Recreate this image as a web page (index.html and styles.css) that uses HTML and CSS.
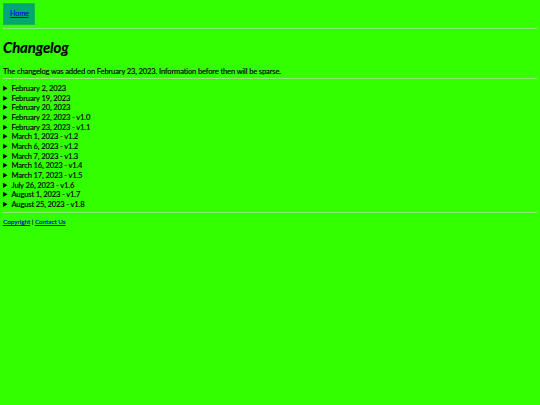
FILE: index.html
```html
<!DOCTYPE html>
<html lang="en">
<head>
  <meta charset="UTF-8" />
  <title>Changelog</title>
  <link rel="stylesheet" href="styles.css">
</head>
<body>
  <nav class="site-nav">
    <a class="nav-item" href="#">Home</a>
  </nav>
  <hr />
  <h1>Changelog</h1>
  <p class="intro">The changelog was added on February 23, 2023. Information before then will be sparse.</p>
  <hr />
  <div class="log-list">
    <details><summary>February 2, 2023</summary></details>
    <details><summary>February 19, 2023</summary></details>
    <details><summary>February 20, 2023</summary></details>
    <details><summary>February 22, 2023 - v1.0</summary></details>
    <details><summary>February 23, 2023 - v1.1</summary></details>
    <details><summary>March 1, 2023 - v1.2</summary></details>
    <details><summary>March 6, 2023 - v1.2</summary></details>
    <details><summary>March 7, 2023 - v1.3</summary></details>
    <details><summary>March 16, 2023 - v1.4</summary></details>
    <details><summary>March 17, 2023 - v1.5</summary></details>
    <details><summary>July 26, 2023 - v1.6</summary></details>
    <details><summary>August 1, 2023 - v1.7</summary></details>
    <details><summary>August 25, 2023 - v1.8</summary></details>
  </div>
  <hr />
  <footer class="site-footer">
    <a href="#">Copyright</a> | <a href="#">Contact Us</a>
  </footer>
</body>
</html>
```

FILE: styles.css
```css
body {
  margin: 3px;
  background: #33ff00;
  color: #000;
  font-family: "Lato", "Noto Sans", sans-serif;
  font-size: 7.6px;
  letter-spacing: -0.16px;
  line-height: 9.67px;
  -webkit-text-stroke: 0.15px;
}

a {
  color: #0000ee;
}

hr {
  margin: 3px 0;
  height: 1px;
  border: none;
  background: #8fe678;
}

.site-nav {
  display: flex;
}

.nav-item {
  display: block;
  padding: 5px 6px;
  width: 18px;
  height: 10px;
  background: #00a86b;
  border: 1px solid #1db54a;
  font-size: 7.2px;
}

h1 {
  margin: 10px 0 12px;
  font-size: 15px;
  line-height: 16px;
  letter-spacing: -0.15px;
  font-weight: bold;
  font-style: italic;
}

.intro {
  margin: 0;
  height: 8px;
}

.log-list {
  margin-top: 5px;
  margin-bottom: -1px;
}

summary::marker {
  font-size: 8px;
}

.site-footer {
  margin-top: 4px;
  font-size: 6.4px;
  letter-spacing: -0.05px;
}
```
